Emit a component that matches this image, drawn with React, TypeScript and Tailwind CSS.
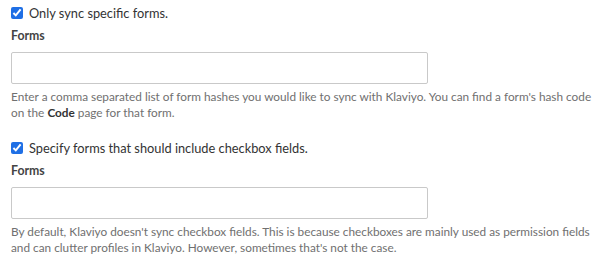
export default function App() {
    const sections = [
        {
            toggle: 'Only sync specific forms.',
            help: (
                <>
                    Enter a comma separated list of form hashes you would like to sync with Klaviyo. You can find a form's hash code on the{' '}
                    <b className="font-bold text-[#333]">Code</b> page for that form.
                </>
            ),
        },
        {
            toggle: 'Specify forms that should include checkbox fields.',
            help: (
                <>
                    By default, Klaviyo doesn't sync checkbox fields. This is because checkboxes are mainly used as permission fields and can clutter profiles in Klaviyo. However, sometimes that's not the case.
                </>
            ),
        },
    ]

    return (
        <div className="w-[603px] h-[268px] bg-white pl-[11px] pr-[4px] pt-[5px] font-['Lato',sans-serif] text-[#333]">
            {sections.map((s, i) => (
                <div key={i} className={i > 0 ? 'mt-[19px]' : ''}>
                    <label className="flex items-center gap-[6px] text-[12.8px] leading-[16px]">
                        <input type="checkbox" defaultChecked className="w-[12px] h-[12px] m-0 accent-[#1f6fe5]" />
                        <span>{s.toggle}</span>
                    </label>
                    <div className="mt-[7px] text-[12.3px] font-bold leading-[16px] text-[#444]">Forms</div>
                    <input type="text" className="mt-[8px] block w-[417px] h-[32px] border border-[#c9c9c9] rounded-[2px] bg-white" />
                    <p className="mt-[5px] text-[11.8px] leading-[16px] text-[#707070]">{s.help}</p>
                </div>
            ))}
        </div>
    )
}
